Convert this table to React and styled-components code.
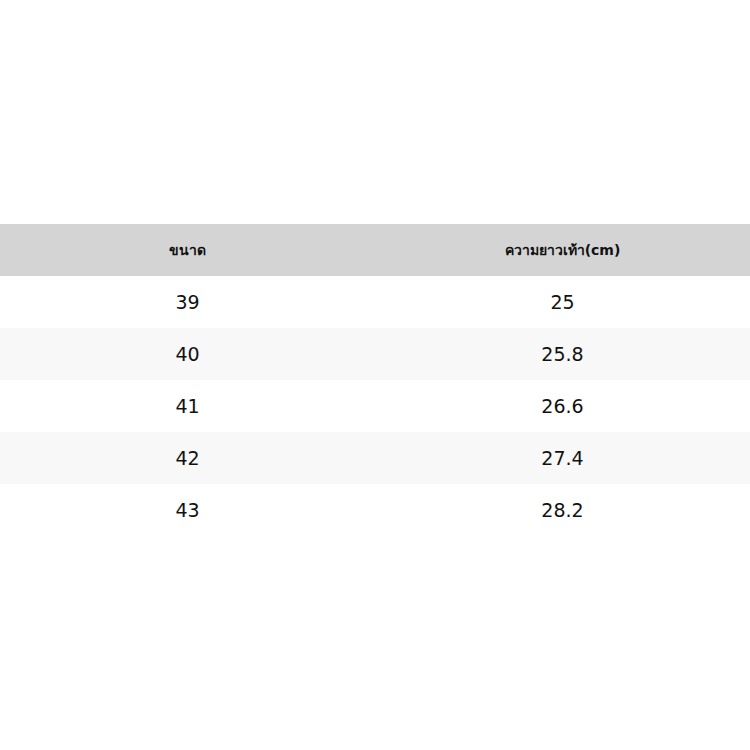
import React from "react";
import styled, { createGlobalStyle } from "styled-components";

const Global = createGlobalStyle`
  html, body { margin: 0; padding: 0; background: #fff; }
  body { font-family: "DejaVu Sans", "Noto Sans", sans-serif; }
`;

const Page = styled.div`
  width: 750px;
  height: 750px;
  padding-top: 224px;
  box-sizing: border-box;
`;

const Table = styled.div`
  display: grid;
  grid-template-columns: 1fr 1fr;
  width: 750px;
`;

const HeadCell = styled.div`
  height: 52px;
  display: flex;
  align-items: center;
  justify-content: center;
  background: #d4d4d4;
  font-size: 14px;
  font-weight: bold;
  color: #111;
`;

const Cell = styled.div`
  height: 52px;
  display: flex;
  align-items: center;
  justify-content: center;
  background: ${(p) => (p.$alt ? "#f8f8f8" : "#ffffff")};
  font-size: 19px;
  color: #111;
`;

const rows = [
  ["39", "25"],
  ["40", "25.8"],
  ["41", "26.6"],
  ["42", "27.4"],
  ["43", "28.2"],
];

export default function App() {
  return (
    <>
      <Global />
      <Page>
        <Table>
          <HeadCell>ขนาด</HeadCell>
          <HeadCell>ความยาวเท้า(cm)</HeadCell>
          {rows.map((r, i) => (
            <React.Fragment key={i}>
              <Cell $alt={i % 2 === 1}>{r[0]}</Cell>
              <Cell $alt={i % 2 === 1}>{r[1]}</Cell>
            </React.Fragment>
          ))}
        </Table>
      </Page>
    </>
  );
}
